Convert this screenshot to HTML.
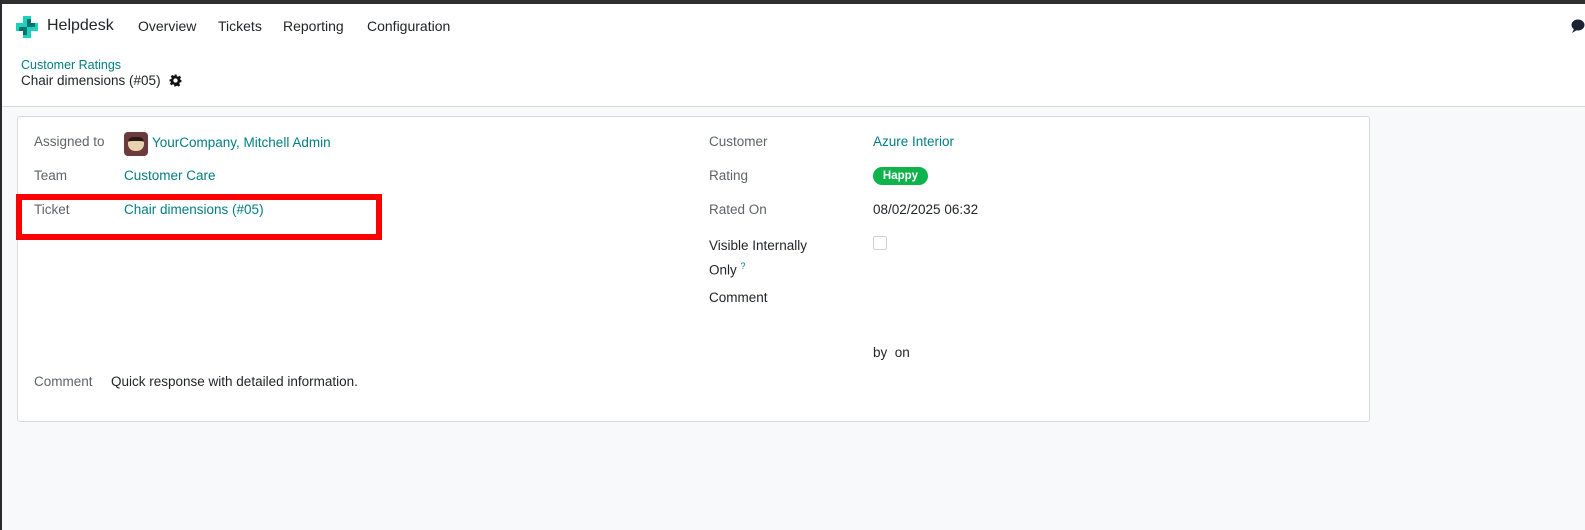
<!DOCTYPE html>
<html><head><meta charset="utf-8"><style>
*{box-sizing:border-box;margin:0;padding:0}
body{width:1585px;height:530px;overflow:hidden;background:#f8f9fa;font-family:"Liberation Sans",sans-serif;font-size:13.5px;color:#212529;position:relative}
.a{position:absolute;white-space:nowrap}
.lab{color:#5f636a}
.lnk{color:#017e84}
.topbar{position:absolute;left:0;top:0;width:1585px;height:4px;background:#2f2f2f}
.leftbar{position:absolute;left:0;top:0;width:2px;height:530px;background:#2a2a33}
.hdr{position:absolute;left:2px;top:4px;width:1583px;height:103px;background:#fff;border-bottom:1px solid #d8dadd}
.card{position:absolute;left:17px;top:116px;width:1353px;height:306px;background:#fff;border:1px solid #d8dadd;border-radius:3px}
</style></head><body>
<div class="hdr"></div>
<div class="topbar"></div>
<div class="leftbar"></div>
<svg class="a" style="left:16px;top:16px" width="22" height="22" viewBox="0 0 22 22">
<path d="M7 0h8v7h7v8h-7v7H7v-7H0V7h7z" fill="#1ad3b9"/>
<path d="M11 3h4v4h4v4h-8zM3 11h8v8H7v-4H3z" fill="#0b6e73"/>
</svg>
<div class="a" style="left:47px;top:17px;font-size:16px;color:#212529">Helpdesk</div>
<div class="a" style="left:138px;top:18px;font-size:14px">Overview</div>
<div class="a" style="left:218px;top:18px;font-size:14px">Tickets</div>
<div class="a" style="left:283px;top:18px;font-size:14px">Reporting</div>
<div class="a" style="left:367px;top:18px;font-size:14px">Configuration</div>
<svg class="a" style="left:1571px;top:19px" width="14" height="15" viewBox="0 0 14 15"><ellipse cx="7" cy="6" rx="6.5" ry="5.5" fill="#1b2233"/><path d="M3 10l-2 4 5-3z" fill="#1b2233"/></svg>
<div class="a lnk" style="left:21px;top:58px;font-size:12.5px">Customer Ratings</div>
<div class="a" style="left:21px;top:73px;font-size:13.5px">Chair dimensions (#05)</div>
<svg class="a" style="left:169px;top:74px" width="13" height="13" viewBox="0 0 24 24"><path fill="#111" d="M10 1h4l.6 3.2 2.2.9 2.7-1.8 2.8 2.8-1.8 2.7.9 2.2L23 11v4l-3.2.6-.9 2.2 1.8 2.7-2.8 2.8-2.7-1.8-2.2.9L12 23h-2l-.6-3.2-2.2-.9-2.7 1.8-2.8-2.8 1.8-2.7-.9-2.2L1 14v-4l3.2-.6.9-2.2-1.8-2.7 2.8-2.8 2.7 1.8 2.2-.9zM12 8a4 4 0 100 8 4 4 0 000-8z"/></svg>
<div class="card"></div>
<div class="a lab" style="left:34px;top:134px">Assigned to</div>
<div class="a" style="left:124px;top:132px;width:24px;height:24px;border-radius:4px;background:#6b3a3a"><div style="margin:5px 4px;width:16px;height:14px;background:#e8d2b0;border-radius:5px 5px 7px 7px;border-top:4px solid #2a1a14"></div></div>
<div class="a lnk" style="left:152px;top:135px">YourCompany, Mitchell Admin</div>
<div class="a lab" style="left:34px;top:168px">Team</div>
<div class="a lnk" style="left:124px;top:168px">Customer Care</div>
<div class="a lab" style="left:34px;top:202px">Ticket</div>
<div class="a lnk" style="left:124px;top:202px">Chair dimensions (#05)</div>
<div class="a" style="left:16px;top:194px;width:366px;height:46px;border:6px solid #ff0000"></div>
<div class="a lab" style="left:34px;top:374px">Comment</div>
<div class="a" style="left:111px;top:374px">Quick response with detailed information.</div>
<div class="a lab" style="left:709px;top:134px">Customer</div>
<div class="a lnk" style="left:873px;top:134px">Azure Interior</div>
<div class="a lab" style="left:709px;top:168px">Rating</div>
<div class="a" style="left:873px;top:167px;width:55px;height:18px;border-radius:9px;background:#0fb34c;color:#fff;font-size:11.5px;font-weight:bold;text-align:center;line-height:18px">Happy</div>
<div class="a lab" style="left:709px;top:202px">Rated On</div>
<div class="a" style="left:873px;top:202px">08/02/2025 06:32</div>
<div class="a" style="left:709px;top:235px;line-height:21px;font-weight:500">Visible Internally<br>Only <sup style="color:#017e84;font-size:9px">?</sup></div>
<div class="a" style="left:873px;top:236px;width:14px;height:14px;border:1px solid #d0d3d6;border-radius:2px"></div>
<div class="a" style="left:709px;top:290px">Comment</div>
<div class="a" style="left:873px;top:345px">by&nbsp; on</div>
</body></html>
